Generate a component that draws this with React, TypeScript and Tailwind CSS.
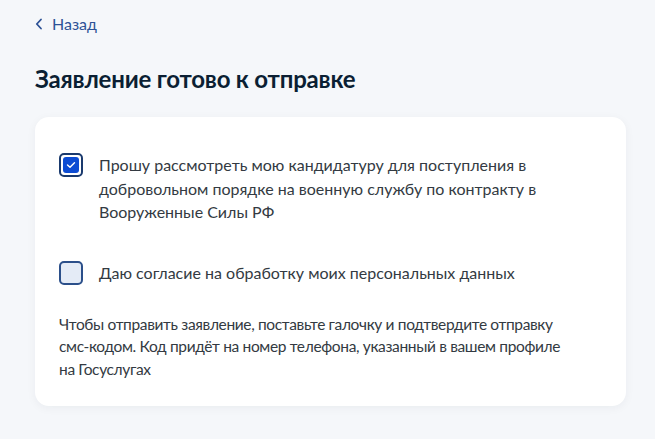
export default function App() {
  return (
    <div className="min-h-[439px] w-full bg-[#f5f7fa] px-[35px] pt-[14px] pb-8 font-['Lato',sans-serif] text-[#0b1f33]">
      <a href="#" className="flex items-center gap-[9px] text-[16px] leading-[20px] text-[#2d5296]">
        <svg width="8" height="12" viewBox="0 0 8 12" fill="none">
          <path d="M6 1.5 1.8 6 6 10.5" stroke="currentColor" strokeWidth="1.8" strokeLinecap="round" strokeLinejoin="round" />
        </svg>
        Назад
      </a>
      <h1 className="mt-[29px] text-[24px] font-bold leading-[32px] tracking-[-0.2px]">
        Заявление готово к отправке
      </h1>
      <div className="mt-[22px] w-[591px] rounded-[14px] bg-white px-6 pt-[36px] pb-[26px] shadow-[0_2px_10px_rgba(11,31,51,0.05)]">
        <label className="flex items-start gap-4">
          <span className="flex h-6 w-6 shrink-0 items-center justify-center rounded-[5px] border-2 border-[#1a3a6e] bg-white">
            <span className="flex h-4 w-4 items-center justify-center rounded-[3px] bg-[#0d4cd3]">
              <svg width="10" height="8" viewBox="0 0 10 8" fill="none">
                <path d="M1.5 4 4 6.3 8.5 1.7" stroke="white" strokeWidth="1.4" strokeLinecap="round" strokeLinejoin="round" />
              </svg>
            </span>
          </span>
          <span className="text-[16px] leading-[23.5px] text-[#333a42]">
            Прошу рассмотреть мою кандидатуру для поступления в<br />
            добровольном порядке на военную службу по контракту в<br />
            Вооруженные Силы РФ
          </span>
        </label>
        <label className="mt-[37px] flex items-center gap-4">
          <span className="h-6 w-6 shrink-0 rounded-[5px] border-2 border-[#2b4f8a] bg-[#e4ebf6]" />
          <span className="text-[16px] leading-[23px] text-[#333a42]">
            Даю согласие на обработку моих персональных данных
          </span>
        </label>
        <p className="mt-[28px] text-[15.5px] leading-[22.5px] tracking-[-0.35px] text-[#333a42]">
          Чтобы отправить заявление, поставьте галочку и подтвердите отправку<br />
          смс-кодом. Код придёт на номер телефона, указанный в вашем профиле<br />
          на Госуслугах
        </p>
      </div>
    </div>
  );
}
